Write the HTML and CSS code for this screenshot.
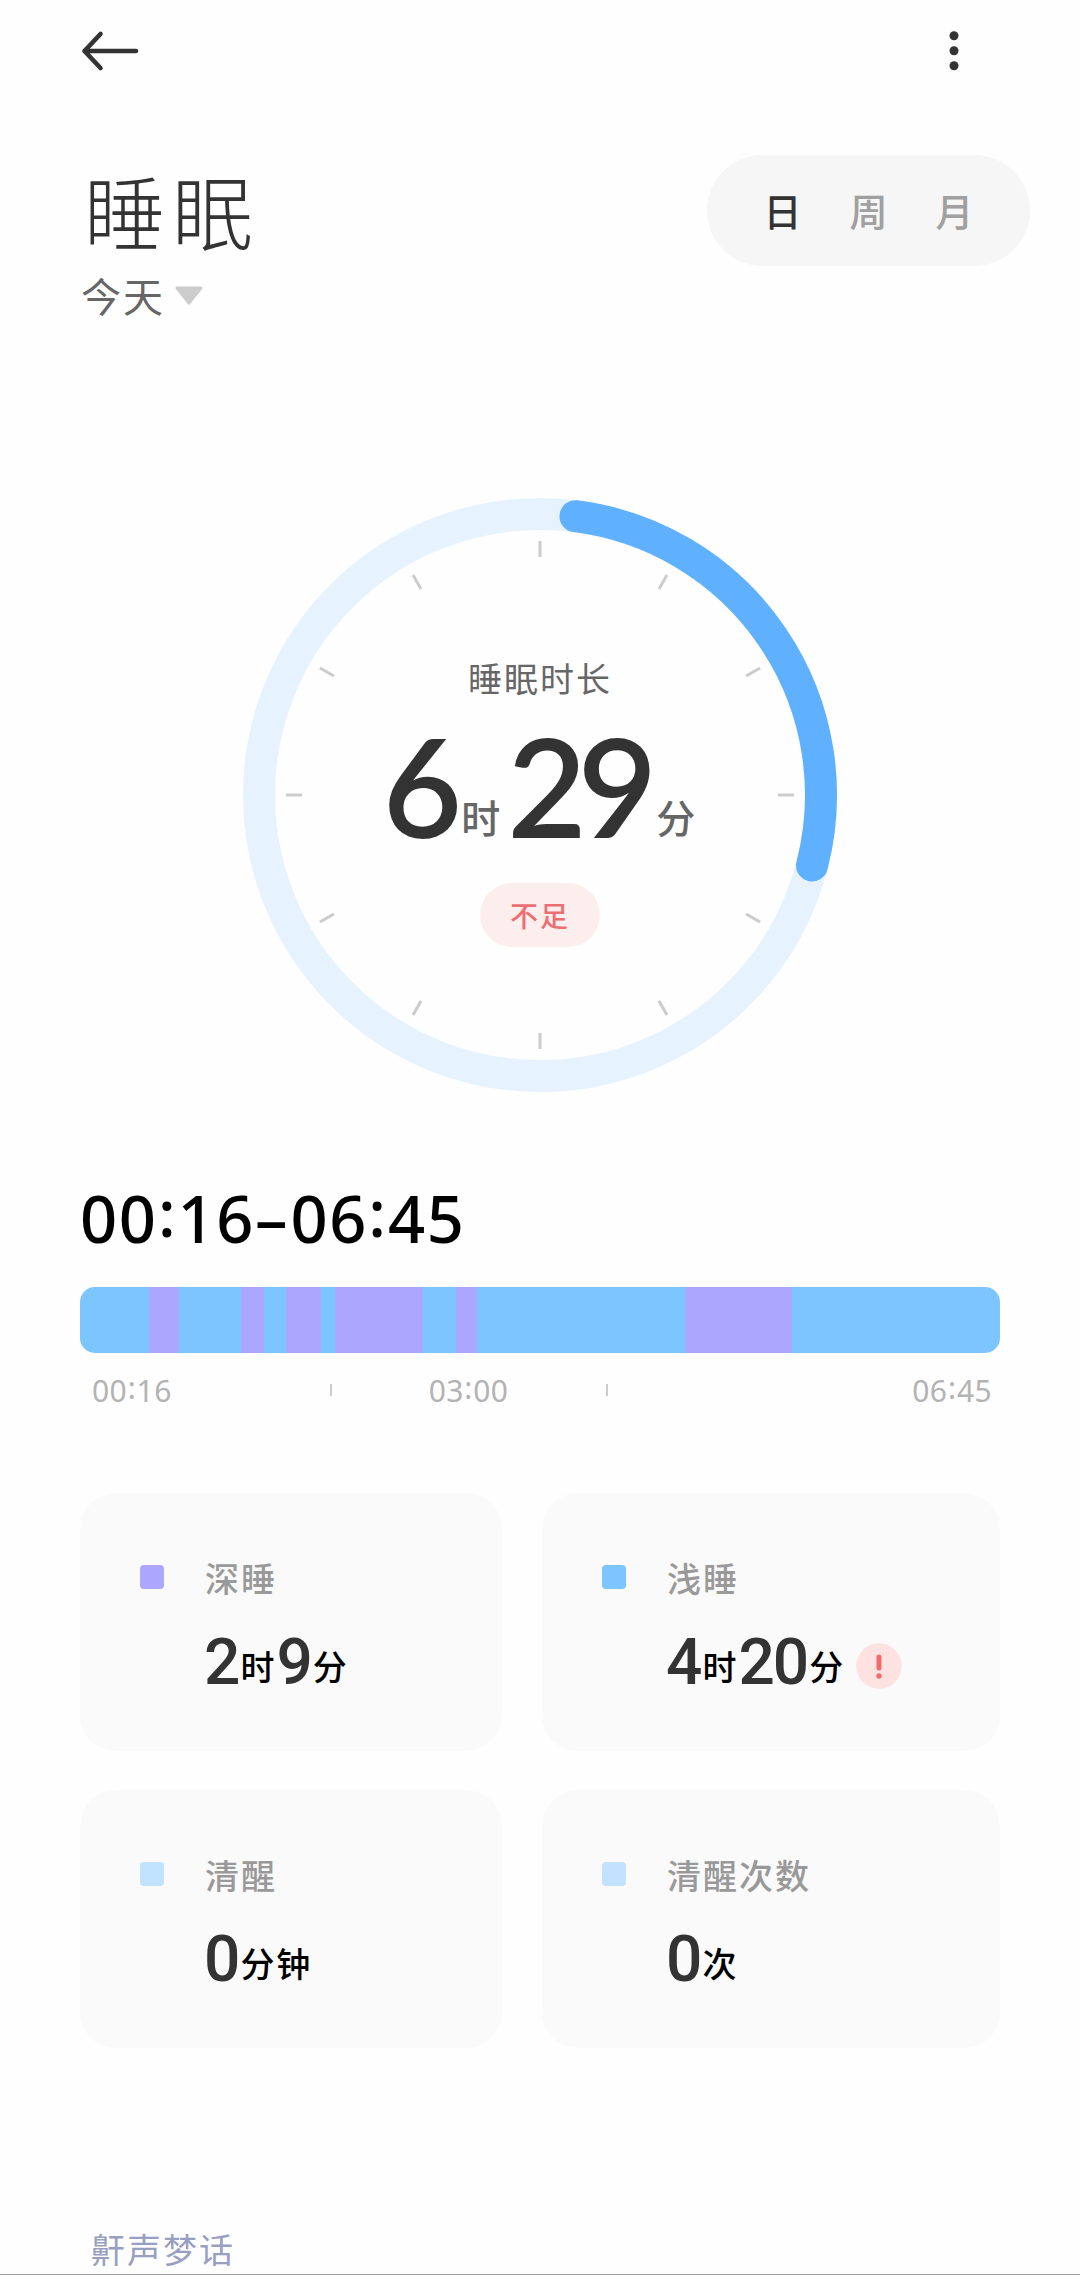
FILE: index.html
```
<!DOCTYPE html>
<html lang="zh-CN">
<head>
    <meta charset="UTF-8">
    <meta name="viewport" content="width=device-width, initial-scale=1.0">
    <title>睡眠</title>
    <link rel="stylesheet" href="styles.css">
</head>
<body>
    <div class="page">
        <div class="topbar">
            <svg class="back" width="60" height="44" viewBox="0 0 60 44">
                <path d="M20.5 5 L4.5 22 L20.5 39 M4.5 22 H56" fill="none" stroke="#333" stroke-width="4.6" stroke-linecap="round" stroke-linejoin="round"/>
            </svg>
            <svg class="more" width="12" height="44" viewBox="0 0 12 44">
                <circle cx="6" cy="6.7" r="4.5"/>
                <circle cx="6" cy="21.7" r="4.5"/>
                <circle cx="6" cy="36.7" r="4.5"/>
            </svg>
        </div>

        <div class="header">
            <div>
                <h1>睡眠</h1>
                <div class="date">
                    <span>今天</span>
                    <svg width="30" height="20" viewBox="0 0 30 20">
                        <path d="M3 2 H27 L15 17 Z" fill="#ccc" stroke="#ccc" stroke-width="3" stroke-linejoin="round"/>
                    </svg>
                </div>
            </div>
            <div class="tabs">
                <span class="tab active">日</span>
                <span class="tab">周</span>
                <span class="tab">月</span>
            </div>
        </div>

        <div class="ring">
            <svg width="596" height="596" viewBox="-298 -298 596 596">
                <circle r="281" fill="none" stroke="#e6f3ff" stroke-width="32"/>
                <path d="M35.5 -278.8 A281 281 0 0 1 272 70.5" fill="none" stroke="#5fb1ff" stroke-width="32" stroke-linecap="round"/>
                <g stroke="#ccc" stroke-width="3">
                    <path d="M0 -254 V-238"/>
                    <path d="M0 -254 V-238" transform="rotate(30)"/>
                    <path d="M0 -254 V-238" transform="rotate(60)"/>
                    <path d="M0 -254 V-238" transform="rotate(90)"/>
                    <path d="M0 -254 V-238" transform="rotate(120)"/>
                    <path d="M0 -254 V-238" transform="rotate(150)"/>
                    <path d="M0 -254 V-238" transform="rotate(180)"/>
                    <path d="M0 -254 V-238" transform="rotate(210)"/>
                    <path d="M0 -254 V-238" transform="rotate(240)"/>
                    <path d="M0 -254 V-238" transform="rotate(270)"/>
                    <path d="M0 -254 V-238" transform="rotate(300)"/>
                    <path d="M0 -254 V-238" transform="rotate(330)"/>
                </g>
            </svg>
            <div class="ring-text">
                <div class="ring-label">睡眠时长</div>
                <div class="total"><b>6</b><span class="hour">时</span><b>29</b><span class="min">分</span></div>
                <div class="badge">不足</div>
            </div>
        </div>

        <h2>00<i>:</i>16<em>–</em>06<i>:</i>45</h2>

        <!-- flex-grow = minutes in each stage -->
        <div class="stages">
            <div class="light" style="flex-grow: 29"></div>
            <div class="deep" style="flex-grow: 13"></div>
            <div class="light" style="flex-grow: 26"></div>
            <div class="deep" style="flex-grow: 10"></div>
            <div class="light" style="flex-grow: 9"></div>
            <div class="deep" style="flex-grow: 15"></div>
            <div class="light" style="flex-grow: 6"></div>
            <div class="deep" style="flex-grow: 37"></div>
            <div class="light" style="flex-grow: 14"></div>
            <div class="deep" style="flex-grow: 9"></div>
            <div class="light" style="flex-grow: 88"></div>
            <div class="deep" style="flex-grow: 45"></div>
            <div class="light" style="flex-grow: 88"></div>
        </div>
        <div class="axis">
            <span>00<i>:</i>16</span>
            <span class="tick"></span>
            <span>03<i>:</i>00</span>
            <span class="tick late"></span>
            <span class="end">06<i>:</i>45</span>
        </div>

        <div class="cards">
            <div class="card">
                <span class="dot deep"></span>
                <div>
                    <div class="name">深睡</div>
                    <div class="value"><b>2</b><span>时</span><b>9</b><span>分</span></div>
                </div>
            </div>
            <div class="card">
                <span class="dot light"></span>
                <div>
                    <div class="name">浅睡</div>
                    <div class="value"><b>4</b><span>时</span><b>20</b><span>分</span><svg class="warn" width="46" height="46" viewBox="0 0 46 46">
                        <circle cx="23" cy="23" r="22.7" fill="#fde2e1"/>
                        <path d="M23 14 V25" stroke="#f06a6e" stroke-width="5" stroke-linecap="round"/>
                        <circle cx="23" cy="33" r="2.7" fill="#f06a6e"/>
                    </svg></div>
                </div>
            </div>
            <div class="card">
                <span class="dot awake"></span>
                <div>
                    <div class="name">清醒</div>
                    <div class="value"><b>0</b><span>分钟</span></div>
                </div>
            </div>
            <div class="card">
                <span class="dot awake"></span>
                <div>
                    <div class="name">清醒次数</div>
                    <div class="value"><b>0</b><span>次</span></div>
                </div>
            </div>
        </div>

        <div class="snore">鼾声梦话</div>
    </div>
</body>
</html>
```

FILE: styles.css
```
* {
    box-sizing: border-box;
}
body {
    margin: 0;
    background: #fefefe;
    font-family: "Noto Sans", "Noto Sans CJK SC", sans-serif;
    color: #333;
}
i, em {
    font-style: normal;
}
.page {
    width: 1080px;
    height: 2275px;
    padding: 0 80px;
    border-bottom: 1px solid #999;
    overflow: hidden;
}
.topbar {
    display: flex;
    justify-content: space-between;
    padding: 29px 40px 0 0;
}
.more {
    fill: #333;
}
.header {
    display: flex;
    justify-content: space-between;
    height: 250px;
    margin-right: -30px;
    padding-top: 82px;
}
h1 {
    margin: 4px 0 0 4px;
    font-family: "Noto Sans CJK SC", sans-serif;
    font-size: 81px;
    font-weight: 300;
    line-height: 100px;
    letter-spacing: 7px;
}
.date {
    display: flex;
    align-items: center;
    gap: 9px;
    margin: 12px 0 0 1px;
    font-size: 40px;
    line-height: 52px;
    letter-spacing: 2px;
    color: #666;
}
.date svg {
    margin-top: -2px;
}
.tabs {
    display: flex;
    justify-content: center;
    gap: 48px;
    width: 323px;
    height: 111px;
    border-radius: 56px;
    background: #f6f6f6;
    font-size: 38px;
    line-height: 113px;
}
.tab {
    color: #a0a0a0;
    font-weight: 500;
}
.tab.active {
    color: #333;
}
.ring {
    position: relative;
    width: 596px;
    height: 596px;
    margin: 174px auto 0;
}
.ring svg {
    display: block;
}
.ring-text {
    position: absolute;
    inset: 0;
    display: flex;
    flex-direction: column;
    align-items: center;
}
.ring-label {
    margin-top: 157px;
    font-size: 34px;
    line-height: 50px;
    letter-spacing: 2px;
    color: #666;
}
.total {
    display: flex;
    align-items: baseline;
    height: 130px;
    margin: 16px 0 0 -2px;
    line-height: 130px;
    font-size: 39px;
    font-weight: 500;
    color: #666;
}
.total b {
    font-family: Lato, sans-serif;
    font-size: 137px;
    font-weight: 600;
    letter-spacing: -9px;
    color: #333;
}
.total span {
    position: relative;
    top: -5px;
}
.hour {
    margin: 0 7px 0 8px;
}
.min {
    margin-left: 8px;
}
.badge {
    width: 120px;
    height: 64px;
    margin-top: 33px;
    border-radius: 32px;
    background: #fdeeee;
    color: #ea6f74;
    font-size: 28px;
    font-weight: 500;
    line-height: 67px;
    letter-spacing: 2px;
    text-align: center;
}
h2 {
    margin: 80px 0 0;
    font-size: 65px;
    font-weight: 500;
    line-height: 90px;
    letter-spacing: 1.5px;
    color: #000;
}
h2 i {
    position: relative;
    top: -6px;
    margin: 0 0.5px;
}
h2 em {
    letter-spacing: 3px;
}
.stages {
    display: flex;
    height: 66px;
    margin-top: 24px;
    border-radius: 15px;
    overflow: hidden;
}
.light {
    background: #7dc5ff;
}
.deep {
    background: #ada6ff;
}
.awake {
    background: #c2e2ff;
}
.axis {
    display: flex;
    align-items: center;
    height: 40px;
    margin-top: 17px;
    padding: 0 8px 0 12px;
    font-size: 30px;
    letter-spacing: 0.4px;
    color: #b3b3b3;
}
.axis i {
    position: relative;
    top: -3px;
    margin: 0 0.5px;
}
.tick {
    width: 2px;
    height: 12px;
    margin: 0 97px 0 158px;
    background: #ccc;
}
.tick.late {
    margin: 0 0 0 98px;
}
.axis .end {
    margin-left: auto;
}
.cards {
    display: grid;
    grid-template-columns: 422px 458px;
    grid-auto-rows: 258px;
    gap: 39px 40px;
    margin-top: 83px;
}
.card {
    display: flex;
    gap: 41px;
    padding: 60px;
    border-radius: 36px;
    background: #fafafa;
}
.dot {
    width: 24px;
    height: 24px;
    margin-top: 12px;
    border-radius: 4px;
}
.name {
    font-size: 34px;
    font-weight: 500;
    line-height: 52px;
    letter-spacing: 2px;
    color: #999;
}
.value {
    display: flex;
    align-items: baseline;
    height: 70px;
    margin: 23px 0 0 -1px;
    font-size: 34px;
    font-weight: 500;
    line-height: 70px;
    letter-spacing: 2px;
    color: #000;
}
.value b {
    font-family: Roboto, sans-serif;
    font-size: 64px;
    font-weight: 500;
    letter-spacing: -2px;
    color: #333;
}
.value span {
    position: relative;
    top: -4px;
    margin-left: 2px;
}
.warn {
    align-self: center;
    margin: 6px 0 0 11px;
}
.snore {
    margin: 176px 0 0 11px;
    font-size: 34px;
    line-height: 52px;
    letter-spacing: 2px;
    color: #989fc0;
}
```
